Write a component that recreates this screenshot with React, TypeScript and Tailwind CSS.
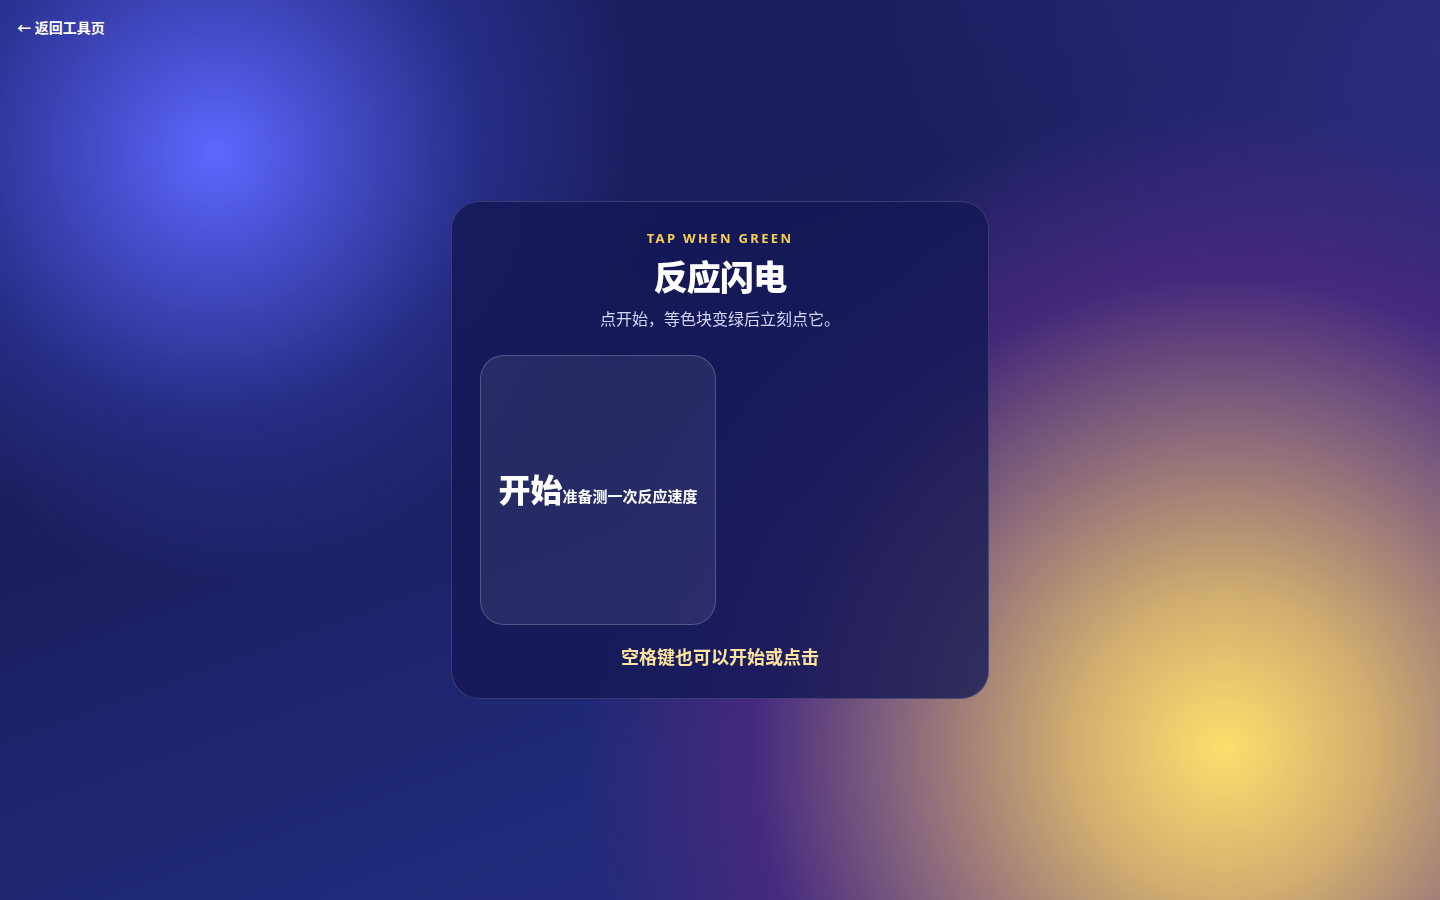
import React from "react";

const font = { fontFamily: '"Noto Sans", "Noto Sans CJK SC", sans-serif' };

export default function App() {
  return (
    <div
      style={font}
      className="relative min-h-screen w-full overflow-hidden bg-[#1b2064] text-white"
    >
      {/* 背景光晕 */}
      <div className="absolute inset-0 bg-[radial-gradient(circle_at_15%_17%,#5f67ff_0px,rgba(84,94,240,0.75)_110px,rgba(60,70,200,0.35)_270px,rgba(27,32,100,0)_430px),radial-gradient(circle_at_85%_83%,#fbdf6d_0px,rgba(228,188,110,0.9)_150px,rgba(165,120,125,0.78)_320px,rgba(90,42,130,0.62)_470px,rgba(60,35,130,0)_640px),radial-gradient(circle_at_100%_5%,rgba(52,48,140,0.7)_0px,rgba(40,40,120,0)_600px),linear-gradient(160deg,#1c2168_0%,#191d5a_35%,#212a7a_70%,#2a2a80_100%)]" />

      <a className="absolute left-[17px] top-[17px] z-10 text-[14px] font-bold text-white" href="#">
        ← 返回工具页
      </a>

      <div className="relative z-10 flex min-h-screen items-center justify-center">
        <div className="flex h-[498px] w-[538px] flex-col items-center rounded-[28px] border border-white/15 bg-[rgba(20,24,85,0.8)] px-[28px] pt-[27px] backdrop-blur-md">
          <div className="text-[13px] font-bold tracking-[0.18em] text-[#f6cf55]">TAP WHEN GREEN</div>
          <h1 className="mt-[6px] text-[34px] font-black leading-[44px] tracking-tight">反应闪电</h1>
          <p className="mt-[8px] text-[16px] text-[#d3d6f5]">点开始，等色块变绿后立刻点它。</p>

          <div className="mt-[24px] flex w-full">
            <button className="flex h-[270px] w-[236px] items-center justify-center rounded-[24px] border border-white/20 bg-white/[0.08] text-white">
              <span className="flex items-baseline">
                <span className="text-[32px] font-black">开始</span>
                <span className="text-[15px] font-bold">准备测一次反应速度</span>
              </span>
            </button>
          </div>

          <p className="mt-[19px] text-[18px] font-bold text-[#fbe3a0]">空格键也可以开始或点击</p>
        </div>
      </div>
    </div>
  );
}
